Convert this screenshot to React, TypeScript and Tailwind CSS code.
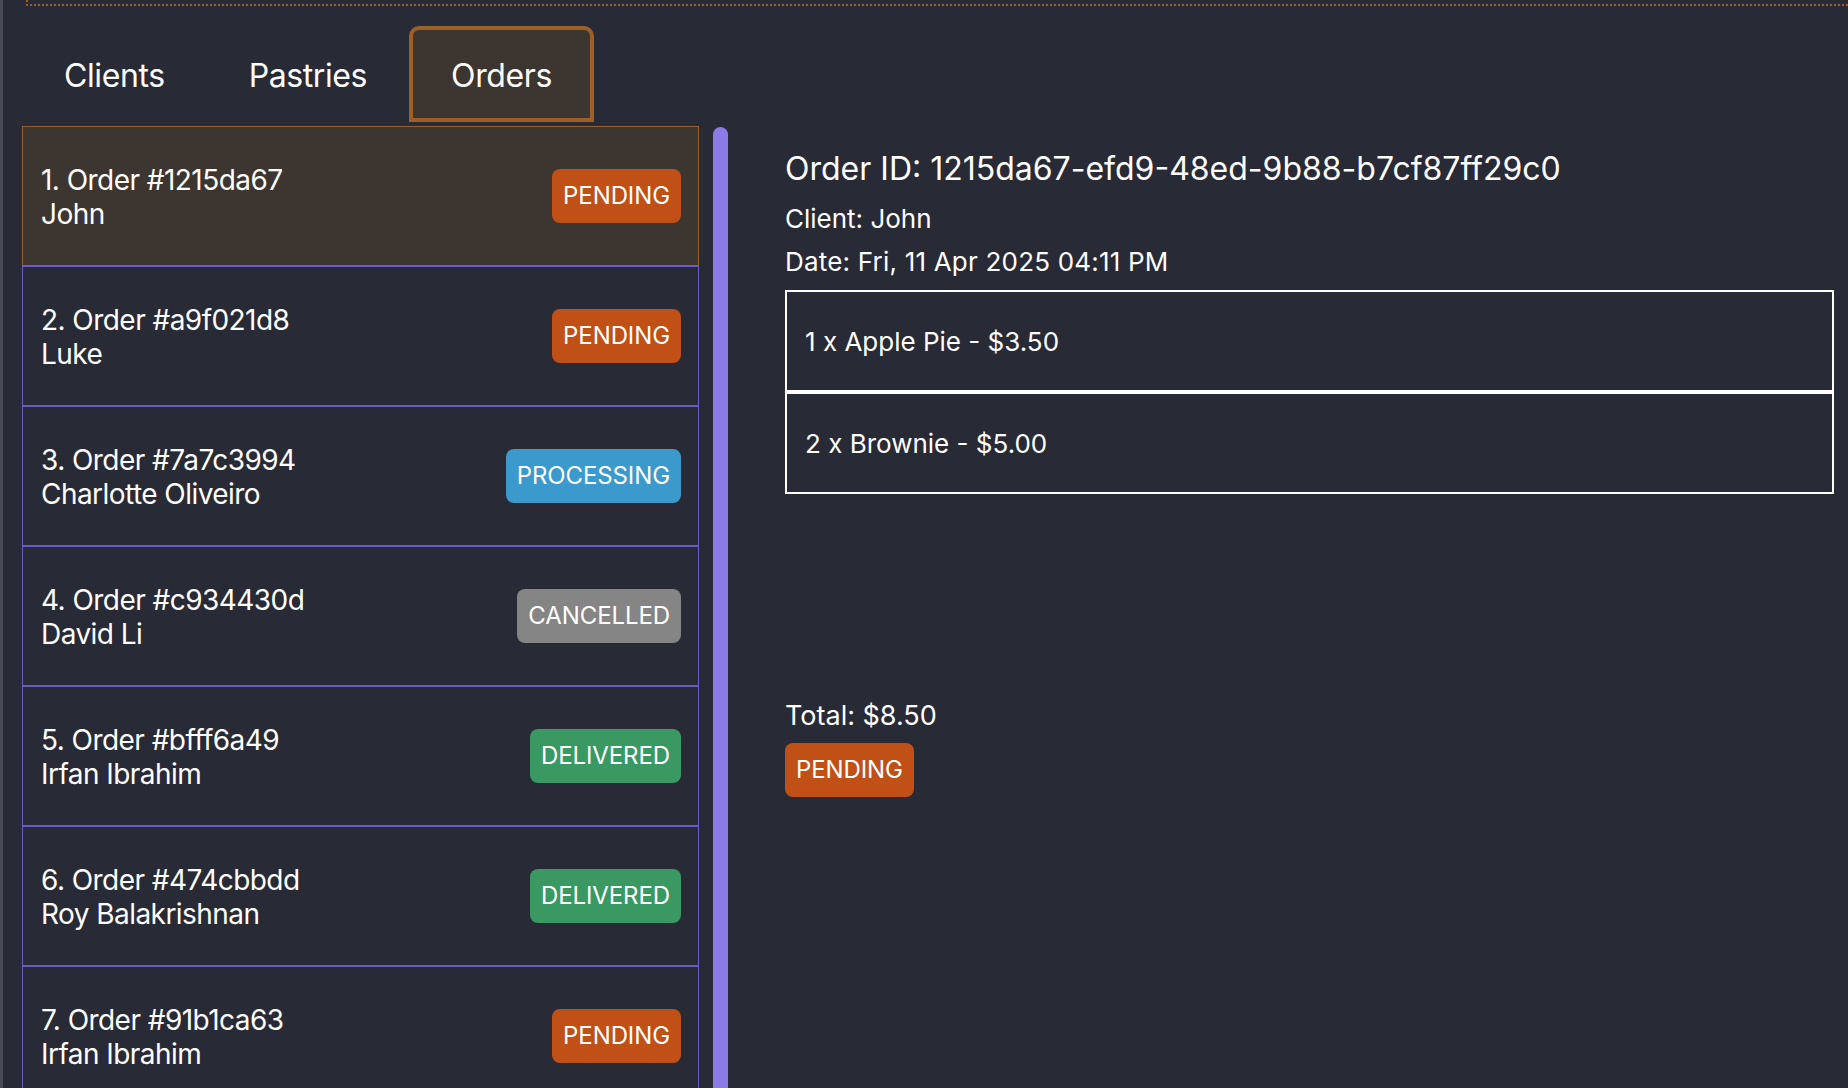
import React from 'react';

type Status = 'PENDING' | 'PROCESSING' | 'CANCELLED' | 'DELIVERED';

interface Order {
  id: string;
  client: string;
  status: Status;
}

const orders: Order[] = [
  { id: '1215da67', client: 'John', status: 'PENDING' },
  { id: 'a9f021d8', client: 'Luke', status: 'PENDING' },
  { id: '7a7c3994', client: 'Charlotte Oliveiro', status: 'PROCESSING' },
  { id: 'c934430d', client: 'David Li', status: 'CANCELLED' },
  { id: 'bfff6a49', client: 'Irfan Ibrahim', status: 'DELIVERED' },
  { id: '474cbbdd', client: 'Roy Balakrishnan', status: 'DELIVERED' },
  { id: '91b1ca63', client: 'Irfan Ibrahim', status: 'PENDING' },
];

const badgeColor: Record<Status, string> = {
  PENDING: 'bg-[#c05016]',
  PROCESSING: 'bg-[#3b9acb]',
  CANCELLED: 'bg-[#858585]',
  DELIVERED: 'bg-[#3a9862]',
};

const StatusBadge: React.FC<{ status: Status }> = ({ status }) => (
  <span
    className={`inline-flex h-[54px] items-center rounded-[8px] px-[11px] text-[24px] tracking-[-0.1px] text-white ${badgeColor[status]}`}
  >
    {status}
  </span>
);

const tabs = ['Clients', 'Pastries', 'Orders'];

export default function App() {
  const selected = 0;

  return (
    <div
      className="flex h-[1088px] w-full flex-col overflow-hidden border-l-[3px] border-[#4a4c55] bg-[#282a36] text-white"
      style={{ fontFamily: 'Inter, "Noto Sans", sans-serif' }}
    >
      {/* focus ring remnant at the top */}
      <div className="ml-[23px] h-[6px] border-b-2 border-l-2 border-dotted border-[#9c6026]" />

      {/* Tabs */}
      <div className="mt-[20px] flex pl-[19px]">
        {tabs.map(tab => (
          <div
            key={tab}
            className={`flex h-[96px] items-center rounded-t-[10px] border-4 px-[38px] pt-[4px] text-[32px] tracking-[-0.4px] ${
              tab === 'Orders' ? 'border-[#9c6026] bg-[#3d3530]' : 'border-transparent'
            }`}
          >
            {tab}
          </div>
        ))}
      </div>

      <div className="mt-[4px] flex min-h-0 flex-1 pl-[19px]">
        {/* Order list */}
        <div className="flex w-[677px] shrink-0 flex-col">
          {orders.map((o, i) => (
            <div
              key={o.id}
              className={`flex h-[140px] shrink-0 items-center justify-between border pl-[18px] pr-[17px] ${
                i === selected ? 'border-[#9c6026] bg-[#3d3530]' : 'border-[#6a5acd]'
              }`}
            >
              <div className="pt-[1px] text-[28px] leading-[34px] tracking-[-0.55px]">
                <div>
                  {i + 1}. Order #{o.id}
                </div>
                <div>{o.client}</div>
              </div>
              <StatusBadge status={o.status} />
            </div>
          ))}
        </div>

        {/* Scrollbar */}
        <div className="ml-[14px] mt-px w-[15px] shrink-0 rounded-t-full bg-[#8b7be6]" />

        {/* Details */}
        <div className="ml-[57px] mr-[14px] flex flex-1 flex-col pt-[24px]">
          <div className="text-[32px] leading-[37px]">
            Order ID: 1215da67-efd9-48ed-9b88-b7cf87ff29c0
          </div>
          <div className="mt-[10px] text-[26px] leading-[43px]">Client: John</div>
          <div className="text-[26px] leading-[43px] tracking-[0.2px]">Date: Fri, 11 Apr 2025 04:11 PM</div>

          <div className="mt-[7px] flex flex-col">
            <div className="flex h-[102px] items-center border-2 border-white px-[18px] text-[26px]">
              1 x Apple Pie - $3.50
            </div>
            <div className="flex h-[102px] items-center border-2 border-white px-[18px] text-[26px]">
              2 x Brownie - $5.00
            </div>
          </div>

          <div className="mt-[206px] text-[27px] leading-[32px]">Total: $8.50</div>
          <div className="mt-[11px]">
            <StatusBadge status="PENDING" />
          </div>
        </div>
      </div>
    </div>
  );
}
